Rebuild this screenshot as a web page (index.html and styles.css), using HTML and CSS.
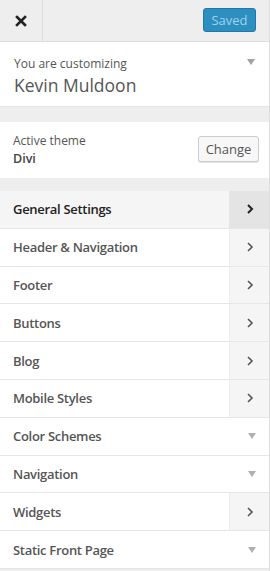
FILE: index.html
```html
<!DOCTYPE html>
<html>
<head>
<meta charset="utf-8">
<link rel="stylesheet" href="styles.css">
</head>
<body>
<div class="panel">
  <header class="topbar">
    <div class="close">
      <svg width="12" height="12" viewBox="0 0 12 12"><path d="M2 2L10 10M10 2L2 10" stroke="#222" stroke-width="2.6" stroke-linecap="square"/></svg>
    </div>
    <div class="spacer"></div>
    <button class="saved">Saved</button>
  </header>
  <section class="info">
    <div class="info-text">
      <div class="label">You are customizing</div>
      <div class="site">Kevin Muldoon</div>
    </div>
    <span class="tri"></span>
  </section>
  <section class="theme">
    <div class="theme-text">
      <div class="label">Active theme</div>
      <div class="theme-name">Divi</div>
    </div>
    <button class="change">Change</button>
  </section>
  <ul class="menu">
    <li class="row active"><span class="title">General Settings</span><span class="arrow"><svg width="8" height="12" viewBox="0 0 8 12"><path d="M2 2L6 6L2 10" fill="none" stroke="#222" stroke-width="2"/></svg></span></li>
    <li class="row"><span class="title">Header &amp; Navigation</span><span class="arrow"><svg width="8" height="12" viewBox="0 0 8 12"><path d="M2 2L6 6L2 10" fill="none" stroke="#555" stroke-width="1.6"/></svg></span></li>
    <li class="row"><span class="title">Footer</span><span class="arrow"><svg width="8" height="12" viewBox="0 0 8 12"><path d="M2 2L6 6L2 10" fill="none" stroke="#555" stroke-width="1.6"/></svg></span></li>
    <li class="row"><span class="title">Buttons</span><span class="arrow"><svg width="8" height="12" viewBox="0 0 8 12"><path d="M2 2L6 6L2 10" fill="none" stroke="#555" stroke-width="1.6"/></svg></span></li>
    <li class="row"><span class="title">Blog</span><span class="arrow"><svg width="8" height="12" viewBox="0 0 8 12"><path d="M2 2L6 6L2 10" fill="none" stroke="#555" stroke-width="1.6"/></svg></span></li>
    <li class="row"><span class="title">Mobile Styles</span><span class="arrow"><svg width="8" height="12" viewBox="0 0 8 12"><path d="M2 2L6 6L2 10" fill="none" stroke="#555" stroke-width="1.6"/></svg></span></li>
    <li class="row"><span class="title">Color Schemes</span><span class="drop"><span class="tri"></span></span></li>
    <li class="row"><span class="title">Navigation</span><span class="drop"><span class="tri"></span></span></li>
    <li class="row"><span class="title">Widgets</span><span class="arrow"><svg width="8" height="12" viewBox="0 0 8 12"><path d="M2 2L6 6L2 10" fill="none" stroke="#555" stroke-width="1.6"/></svg></span></li>
    <li class="row"><span class="title">Static Front Page</span><span class="drop"><span class="tri"></span></span></li>
  </ul>
</div>
</body>
</html>
```
FILE: styles.css
```css
* { box-sizing: border-box; }
html, body { margin: 0; padding: 0; }
body {
  background: #eeeeee;
  font-family: "Open Sans", "Liberation Sans", sans-serif;
  color: #555;
}
.panel {
  width: 270px;
  min-height: 571px;
  border-right: 1px solid #dddddd;
  background: #eeeeee;
}
.topbar {
  display: flex;
  align-items: center;
  height: 42px;
  border-bottom: 1px solid #dddddd;
}
.close {
  width: 43px;
  height: 41px;
  border-right: 1px solid #dddddd;
  display: flex;
  align-items: center;
  justify-content: center;
}
.spacer { flex: 1; }
.saved {
  margin-right: 13px;
  margin-top: -2px;
  width: 53px;
  height: 24px;
  background: #2d8fc0;
  border: 1px solid #1f78a5;
  border-radius: 3px;
  color: #9fd2ec;
  font-family: inherit;
  font-size: 13px;
  padding: 0;
  line-height: 22px;
}
.info {
  background: #fff;
  display: flex;
  align-items: flex-start;
  padding: 13px 12px 15px 14px;
  height: 65px;
  border-bottom: 1px solid #e4e4e4;
}
.info-text { flex: 1; }
.label { font-size: 12px; line-height: 18px; color: #555; }
.site { font-size: 17.5px; line-height: 24px; color: #555; margin-top: 0; }
.tri {
  display: inline-block;
  width: 0; height: 0;
  border-left: 4px solid transparent;
  border-right: 4px solid transparent;
  border-top: 6px solid #a0a0a0;
}
.info .tri { margin-top: 4px; margin-right: 2px; }
.theme {
  background: #fff;
  margin-top: 15px;
  display: flex;
  align-items: center;
  height: 56px;
  padding: 0 10px 0 13px;
}
.theme-text { flex: 1; }
.theme-name { font-size: 12.5px; font-weight: 600; line-height: 18px; color: #444; }
.change {
  width: 61px;
  height: 26px;
  margin-top: -2px;
  background: #f7f7f7;
  border: 1px solid #cccccc;
  border-radius: 3px;
  box-shadow: 0 1px 0 #e2e2e2;
  font-family: inherit;
  font-size: 13px;
  color: #555;
  padding: 0;
}
.menu {
  list-style: none;
  margin: 13px 0 0;
  padding: 0;
  background: #fff;
}
.row {
  display: flex;
  align-items: stretch;
  height: 37.8px;
  border-bottom: 1px solid #e6e6e6;
  background: #fff;
}
.row .title {
  flex: 1;
  display: flex;
  align-items: center;
  padding-left: 13px;
  font-size: 13px;
  font-weight: 600;
  letter-spacing: -0.3px;
  color: #555;
}
.row .arrow, .row .drop {
  width: 40px;
  display: flex;
  align-items: center;
  justify-content: center;
}
.row .arrow { background: #f5f5f5; border-left: 1px solid #eeeeee; }
.row.active { background: #f5f5f5; }
.row.active .title { color: #222; }
.row.active .arrow { background: #e4e4e4; border-left-color: #e4e4e4; }
.row .drop .tri { margin-left: 6px; border-top-color: #b0b0b0; }
```
